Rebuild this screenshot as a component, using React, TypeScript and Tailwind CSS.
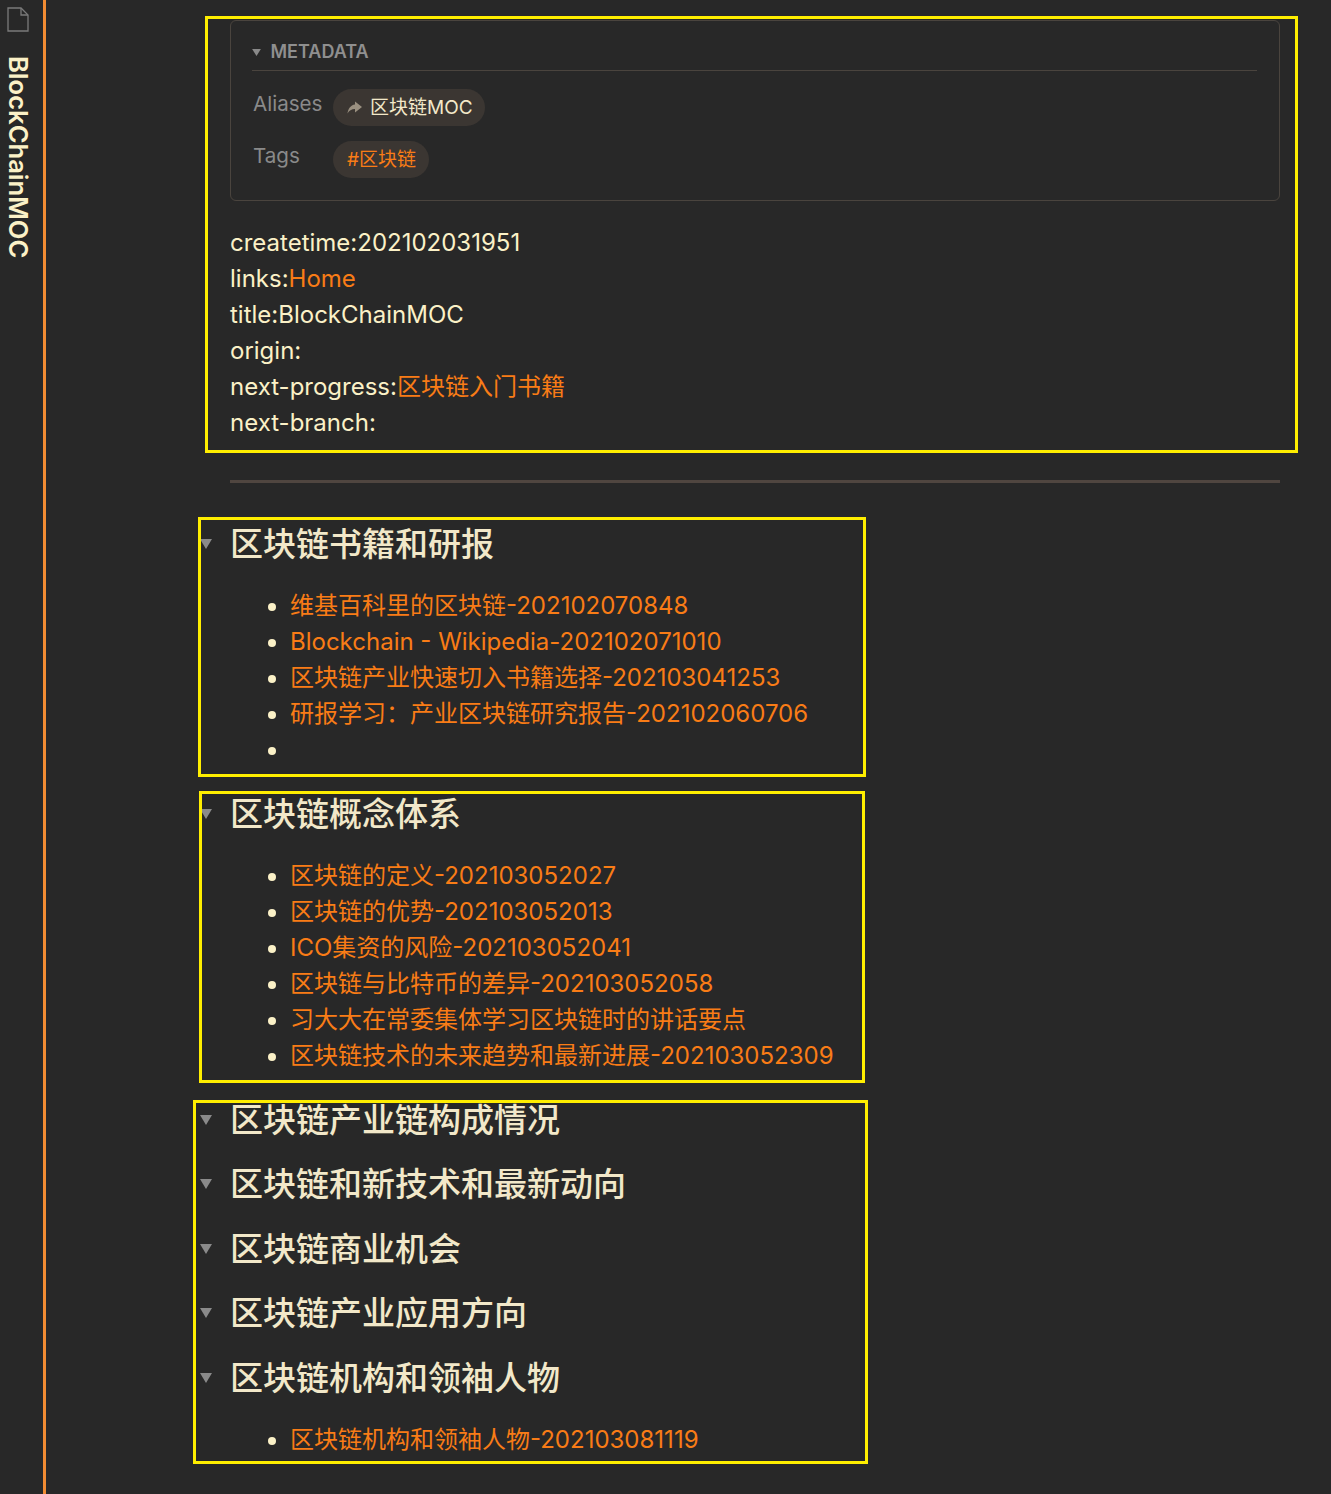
const font = 'font-["Inter","Noto_Sans_CJK_SC",sans-serif]';

function Caret() {
  return (
    <svg viewBox="0 0 12 10" className="absolute left-[-30px] top-[20px] w-[12px] h-[10px]">
      <path d="M0 0H12L6 10Z" fill="#8a8a8a" />
    </svg>
  );
}

function Heading({ children, className = "" }: { children: string; className?: string }) {
  return (
    <h2 className={`relative text-[33px] leading-[50px] font-medium text-[#f2e8c9] ${className}`}>
      <Caret />
      {children}
    </h2>
  );
}

function Links({ items, className = "" }: { items: string[]; className?: string }) {
  return (
    <ul className={`list-none pl-[60px] ${className}`}>
      {items.map((t, i) => (
        <li key={i} className="relative h-[36px] text-[#f97c16]">
          <span className="absolute left-[-22px] top-[15px] h-[8px] w-[8px] rounded-full bg-[#fbf1c7]" />
          {t}
        </li>
      ))}
    </ul>
  );
}

function Box({ cls }: { cls: string }) {
  return <div className={`absolute border-[3px] border-[#ffee00] pointer-events-none ${cls}`} />;
}

export default function App() {
  return (
    <div className={`relative flex h-[1494px] overflow-hidden bg-[#282828] text-[24px] leading-[36px] text-[#fbf1c7] ${font}`}>
      <aside className="w-[46px] shrink-0 border-r-[3px] border-[#f28c33] flex flex-col items-center pr-[5px] pt-[7px]">
        <svg viewBox="0 0 22 25" className="w-[22px] h-[25px] shrink-0 -ml-[3px]" fill="none" stroke="#7a7a7a" strokeWidth="1.3">
          <path d="M1 1H14L21 8V24H1Z" />
          <path d="M14 1V8H21" />
        </svg>
        <div className="mt-[24px] text-[25.6px] leading-[24px] font-semibold text-[#fbf1c7] [writing-mode:vertical-rl] whitespace-nowrap -ml-[2px]">
          BlockChainMOC
        </div>
      </aside>

      <main className="ml-[184px] w-[1050px] pt-[20px]">
        <section className="h-[181px] rounded-[6px] border border-[#4a443e] pl-[21px] pr-[22px] pt-[13px]">
          <div className="flex h-[37px] items-center gap-[9.5px] border-b border-[#4a443e] text-[18px] font-semibold text-[#8f8f8f]">
            <svg viewBox="0 0 10 8" className="w-[9px] h-[7px]"><path d="M0 0H10L5 8Z" fill="#8a8a8a" /></svg>
            METADATA
          </div>
          <div className="mt-[18px] flex h-[37px] items-start">
            <div className="w-[81px] pl-[1px] text-[20.6px] leading-[30px] text-[#8a8a8a]">Aliases</div>
            <div className="flex h-[37px] items-center gap-[8px] rounded-full bg-[#3b3632] pl-[14px] pr-[12px] text-[19px] text-[#f2e8c9]">
              <svg viewBox="0 0 15 13" className="w-[15px] h-[13px]"><path d="M8 0.5L15 6L8 11.5V8C4.5 8 2 9.5 0.5 12.5C1 8 3.5 4 8 3.5Z" fill="#9a9080" /></svg>
              区块链MOC
            </div>
          </div>
          <div className="mt-[15px] flex h-[37px] items-start">
            <div className="w-[81px] pl-[1px] text-[20.6px] leading-[30px] text-[#8a8a8a]">Tags</div>
            <div className="flex h-[37px] items-center rounded-full bg-[#3b3632] pl-[14px] pr-[13px] text-[19px] text-[#f97c16]">#区块链</div>
          </div>
        </section>

        <div className="mt-[24px]">
          <div>createtime:202102031951</div>
          <div>links:<span className="text-[#f97c16]">Home</span></div>
          <div>title:BlockChainMOC</div>
          <div>origin:</div>
          <div>next-progress:<span className="text-[#f97c16]">区块链入门书籍</span></div>
          <div>next-branch:</div>
        </div>

        <hr className="mt-[39px] h-[3px] border-0 bg-[#504640]" />

        <Heading className="mt-[36px]">区块链书籍和研报</Heading>
        <Links
          className="mt-[19px]"
          items={[
            "维基百科里的区块链-202102070848",
            "Blockchain - Wikipedia-202102071010",
            "区块链产业快速切入书籍选择-202103041253",
            "研报学习：产业区块链研究报告-202102060706",
            "",
          ]}
        />
        <Heading className="mt-[21px]">区块链概念体系</Heading>
        <Links
          className="mt-[19px]"
          items={[
            "区块链的定义-202103052027",
            "区块链的优势-202103052013",
            "ICO集资的风险-202103052041",
            "区块链与比特币的差异-202103052058",
            "习大大在常委集体学习区块链时的讲话要点",
            "区块链技术的未来趋势和最新进展-202103052309",
          ]}
        />
        <Heading className="mt-[21px]">区块链产业链构成情况</Heading>
        <Heading className="mt-[14px]">区块链和新技术和最新动向</Heading>
        <Heading className="mt-[15px]">区块链商业机会</Heading>
        <Heading className="mt-[14px]">区块链产业应用方向</Heading>
        <Heading className="mt-[15px]">区块链机构和领袖人物</Heading>
        <Links className="mt-[19px]" items={["区块链机构和领袖人物-202103081119"]} />
      </main>

      <Box cls="left-[205px] top-[16px] w-[1093px] h-[437px]" />
      <Box cls="left-[198px] top-[517px] w-[668px] h-[260px]" />
      <Box cls="left-[199px] top-[791px] w-[666px] h-[292px]" />
      <Box cls="left-[193px] top-[1100px] w-[675px] h-[364px]" />
    </div>
  );
}
